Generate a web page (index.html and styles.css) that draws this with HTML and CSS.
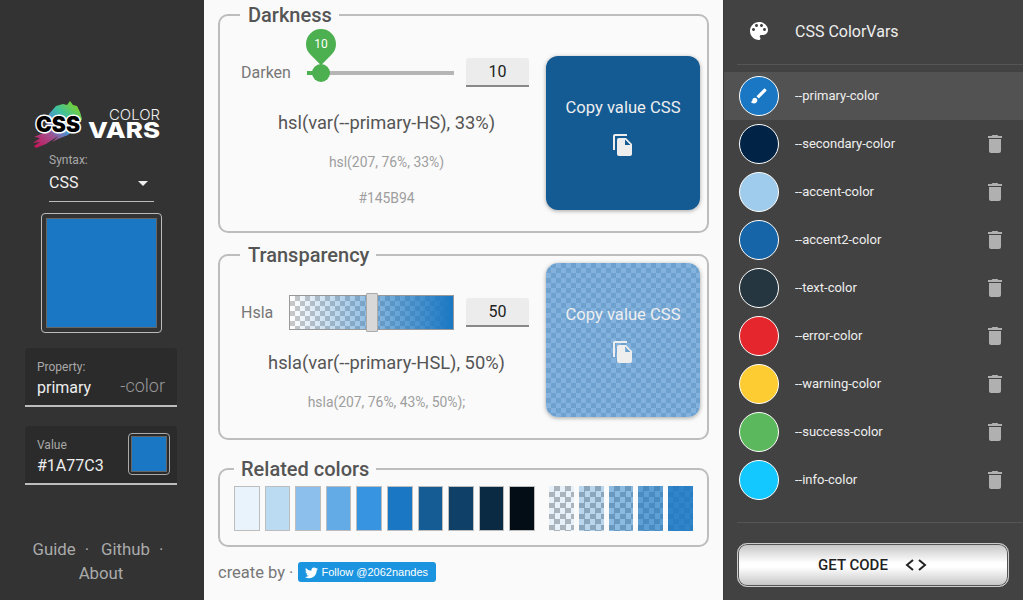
FILE: index.html
```html
<!DOCTYPE html>
<html lang="en">
<head>
<meta charset="utf-8">
<title>CSS ColorVars</title>
<link rel="stylesheet" href="styles.css">
</head>
<body>
<div class="app">
  <aside class="side">
    <svg class="logo" width="135" height="52" viewBox="0 0 135 52">
      <defs>
        <linearGradient id="brush" x1="46" y1="4" x2="6" y2="48" gradientUnits="userSpaceOnUse">
          <stop offset="0" stop-color="#7ed321"/>
          <stop offset=".3" stop-color="#3fc0a0"/>
          <stop offset=".5" stop-color="#4f8fd0"/>
          <stop offset=".7" stop-color="#a0508f"/>
          <stop offset="1" stop-color="#c2185b"/>
        </linearGradient>
      </defs>
      <polygon fill="url(#brush)" points="19,16 26,8 33,6 37,7 40,3 43,7 47,8 50,14 52,21 47,29 38,37 28,41 22,44 28,38 16,46 6,50 4,48 10,44 3,45 10,40 4,39 13,35 17,30"/>
      <text class="logo-css" x="6" y="34" textLength="44" lengthAdjust="spacingAndGlyphs">CSS</text>
      <text class="logo-color" x="79" y="22" textLength="51" lengthAdjust="spacingAndGlyphs">COLOR</text>
      <text class="logo-vars" x="58" y="40" textLength="72" lengthAdjust="spacingAndGlyphs">VARS</text>
    </svg>

    <div class="syntax">
      <div class="syntax-label">Syntax:</div>
      <div class="syntax-value"><span>CSS</span><i class="caret"></i></div>
    </div>

    <div class="preview"><div class="preview-fill"></div></div>

    <div class="field field-property">
      <div class="field-main">
        <div class="field-label">Property:</div>
        <div class="field-value">primary</div>
      </div>
      <div class="field-suffix">-color</div>
    </div>

    <div class="field field-color">
      <div class="field-main">
        <div class="field-label">Value</div>
        <div class="field-value">#1A77C3</div>
      </div>
      <div class="mini"><div class="mini-fill"></div></div>
    </div>

    <nav class="links">
      <a>Guide</a><span class="dot">·</span><a>Github</a><span class="dot dot-end">·</span> <a>About</a>
    </nav>
  </aside>

  <main class="main">
    <fieldset class="box box-dark">
      <legend>Darkness</legend>
      <div class="box-inner">
        <div class="col">
          <div class="row">
            <label class="row-label label-dark">Darken</label>
            <div class="slider">
              <div class="track"></div>
              <div class="track-on"></div>
              <div class="knob"></div>
              <div class="pin"><div class="pin-shape"></div><span class="pin-text">10</span></div>
            </div>
            <div class="num">10</div>
          </div>
          <div class="formula">hsl(var(--primary-HS), 33%)</div>
          <div class="result">hsl(207, 76%, 33%)</div>
          <div class="result result-2">#145B94</div>
        </div>
        <button class="copy copy-dark">
          <span>Copy value CSS</span>
          <svg class="copy-icon" width="24" height="24" viewBox="0 0 24 24"><path d="M16 1H4c-1.1 0-2 .9-2 2v14h2V3h12V1zm-1 4l6 6v10c0 1.1-.9 2-2 2H7.99C6.89 23 6 22.1 6 21l.01-14c0-1.1.89-2 1.99-2h7zm-1 7h5.5L14 6.5V12z"/></svg>
        </button>
      </div>
    </fieldset>

    <fieldset class="box box-alpha">
      <legend>Transparency</legend>
      <div class="box-inner">
        <div class="col">
          <div class="row row-alpha">
            <label class="row-label label-alpha">Hsla</label>
            <div class="alpha"><div class="alpha-thumb"></div></div>
            <div class="num">50</div>
          </div>
          <div class="formula">hsla(var(--primary-HSL), 50%)</div>
          <div class="result">hsla(207, 76%, 43%, 50%);</div>
        </div>
        <button class="copy copy-alpha">
          <span>Copy value CSS</span>
          <svg class="copy-icon" width="24" height="24" viewBox="0 0 24 24"><path d="M16 1H4c-1.1 0-2 .9-2 2v14h2V3h12V1zm-1 4l6 6v10c0 1.1-.9 2-2 2H7.99C6.89 23 6 22.1 6 21l.01-14c0-1.1.89-2 1.99-2h7zm-1 7h5.5L14 6.5V12z"/></svg>
        </button>
      </div>
    </fieldset>

    <fieldset class="box box-related">
      <legend>Related colors</legend>
      <div class="swatches">
        <div class="sw-group sw-solid">
          <div class="sw s1"></div><div class="sw s2"></div><div class="sw s3"></div><div class="sw s4"></div><div class="sw s5"></div>
          <div class="sw s6"></div><div class="sw s7"></div><div class="sw s8"></div><div class="sw s9"></div><div class="sw s10"></div>
        </div>
        <div class="sw-group sw-alpha">
          <div class="sa a1"></div><div class="sa a2"></div><div class="sa a3"></div><div class="sa a4"></div><div class="sa a5"></div>
        </div>
      </div>
    </fieldset>

    <div class="credit">
      <span>create by ·</span>
      <a class="tw">
        <svg width="15" height="15" viewBox="0 0 24 24"><path d="M22.46 6c-.77.35-1.6.58-2.46.69.88-.53 1.56-1.37 1.88-2.38-.83.5-1.75.85-2.72 1.05C18.37 4.5 17.26 4 16 4c-2.35 0-4.27 1.92-4.27 4.29 0 .34.04.67.11.98C8.28 9.09 5.11 7.38 3 4.79c-.37.63-.58 1.37-.58 2.15 0 1.49.75 2.81 1.91 3.56-.71 0-1.37-.2-1.95-.5v.03c0 2.08 1.48 3.82 3.44 4.21a4.22 4.22 0 0 1-1.93.07 4.28 4.28 0 0 0 4 2.98 8.521 8.521 0 0 1-5.33 1.84c-.34 0-.68-.02-1.02-.06C3.44 20.29 5.7 21 8.12 21 16 21 20.33 14.46 20.33 8.79c0-.19 0-.37-.01-.56.84-.6 1.56-1.36 2.14-2.23z"/></svg>
        <span>Follow @2062nandes</span>
      </a>
    </div>
  </main>

  <aside class="drawer">
    <header class="drawer-head">
      <svg class="palette" width="24" height="24" viewBox="0 0 24 24"><path d="M12 3c-4.97 0-9 4.03-9 9s4.03 9 9 9c.83 0 1.5-.67 1.5-1.5 0-.39-.15-.74-.39-1.01-.23-.26-.38-.61-.38-.99 0-.83.67-1.5 1.5-1.5H16c2.76 0 5-2.24 5-5 0-4.42-4.03-8-9-8zm-5.5 9c-.83 0-1.5-.67-1.5-1.5S5.67 9 6.5 9 8 9.67 8 10.5 7.33 12 6.5 12zm3-4C8.67 8 8 7.33 8 6.5S8.67 5 9.5 5s1.5.67 1.5 1.5S10.33 8 9.5 8zm5 0c-.83 0-1.5-.67-1.5-1.5S13.67 5 14.5 5s1.5.67 1.5 1.5S15.33 8 14.5 8zm3 4c-.83 0-1.5-.67-1.5-1.5S16.67 9 17.5 9s1.5.67 1.5 1.5-.67 1.5-1.5 1.5z"/></svg>
      <span class="drawer-title">CSS ColorVars</span>
    </header>
    <ul class="vars">
      <li class="var var-active">
        <span class="dotc c-primary"><svg width="24" height="24" viewBox="0 0 24 24"><path d="M7 14c-1.66 0-3 1.34-3 3 0 1.31-1.16 2-2 2 .92 1.22 2.49 2 4 2 2.21 0 4-1.79 4-4 0-1.66-1.34-3-3-3zm13.71-9.37l-1.34-1.34c-.39-.39-1.02-.39-1.41 0L9 12.25 11.75 15l8.96-8.96c.39-.39.39-1.02 0-1.41z"/></svg></span>
        <span class="var-name">--primary-color</span>
      </li>
      <li class="var"><span class="dotc c-secondary"></span><span class="var-name">--secondary-color</span><svg class="trash" width="24" height="24" viewBox="0 0 24 24"><path d="M6 19c0 1.1.9 2 2 2h8c1.1 0 2-.9 2-2V7H6v12zM19 4h-3.5l-1-1h-5l-1 1H5v2h14V4z"/></svg></li>
      <li class="var"><span class="dotc c-accent"></span><span class="var-name">--accent-color</span><svg class="trash" width="24" height="24" viewBox="0 0 24 24"><path d="M6 19c0 1.1.9 2 2 2h8c1.1 0 2-.9 2-2V7H6v12zM19 4h-3.5l-1-1h-5l-1 1H5v2h14V4z"/></svg></li>
      <li class="var"><span class="dotc c-accent2"></span><span class="var-name">--accent2-color</span><svg class="trash" width="24" height="24" viewBox="0 0 24 24"><path d="M6 19c0 1.1.9 2 2 2h8c1.1 0 2-.9 2-2V7H6v12zM19 4h-3.5l-1-1h-5l-1 1H5v2h14V4z"/></svg></li>
      <li class="var"><span class="dotc c-text"></span><span class="var-name">--text-color</span><svg class="trash" width="24" height="24" viewBox="0 0 24 24"><path d="M6 19c0 1.1.9 2 2 2h8c1.1 0 2-.9 2-2V7H6v12zM19 4h-3.5l-1-1h-5l-1 1H5v2h14V4z"/></svg></li>
      <li class="var"><span class="dotc c-error"></span><span class="var-name">--error-color</span><svg class="trash" width="24" height="24" viewBox="0 0 24 24"><path d="M6 19c0 1.1.9 2 2 2h8c1.1 0 2-.9 2-2V7H6v12zM19 4h-3.5l-1-1h-5l-1 1H5v2h14V4z"/></svg></li>
      <li class="var"><span class="dotc c-warning"></span><span class="var-name">--warning-color</span><svg class="trash" width="24" height="24" viewBox="0 0 24 24"><path d="M6 19c0 1.1.9 2 2 2h8c1.1 0 2-.9 2-2V7H6v12zM19 4h-3.5l-1-1h-5l-1 1H5v2h14V4z"/></svg></li>
      <li class="var"><span class="dotc c-success"></span><span class="var-name">--success-color</span><svg class="trash" width="24" height="24" viewBox="0 0 24 24"><path d="M6 19c0 1.1.9 2 2 2h8c1.1 0 2-.9 2-2V7H6v12zM19 4h-3.5l-1-1h-5l-1 1H5v2h14V4z"/></svg></li>
      <li class="var"><span class="dotc c-info"></span><span class="var-name">--info-color</span><svg class="trash" width="24" height="24" viewBox="0 0 24 24"><path d="M6 19c0 1.1.9 2 2 2h8c1.1 0 2-.9 2-2V7H6v12zM19 4h-3.5l-1-1h-5l-1 1H5v2h14V4z"/></svg></li>
    </ul>
    <div class="drawer-foot">
      <button class="get">
        <span>GET CODE</span>
        <svg width="24" height="14" viewBox="0 0 24 14"><path class="code-mark" d="M9 2 L3 7 L9 12 M15 2 L21 7 L15 12"/></svg>
      </button>
    </div>
  </aside>
</div>
</body>
</html>
```

FILE: styles.css
```css
* { box-sizing: border-box; }
html, body { margin: 0; height: 100%; }
body { font-family: Roboto, "Liberation Sans", sans-serif; overflow: hidden; }

.app { display: flex; width: 1023px; height: 600px; }

/* Left sidebar */
.side {
  width: 204px;
  flex: none;
  background: #333;
  padding: 98px 27px 0 25px;
  display: flex;
  flex-direction: column;
  align-items: stretch;
}
.logo { display: block; margin-left: 5px; flex: none; }
.logo-css {
  font: 900 21px Inter, "Liberation Sans", sans-serif;
  fill: #000;
  stroke: #fff;
  stroke-width: 3px;
  stroke-linejoin: round;
  paint-order: stroke;
}
.logo-color {
  font: 300 14px Inter, "Liberation Sans", sans-serif;
  fill: #f0f0f0;
}
.logo-vars {
  font: 800 22px Inter, "Liberation Sans", sans-serif;
  fill: #fff;
}
.syntax { margin: 3px 0 0 24px; width: 105px; border-bottom: 1px solid #bbb; padding-bottom: 8px; }
.syntax-label { font-size: 12px; line-height: 14px; color: #a8a8a8; }
.syntax-value {
  margin-top: 6px;
  display: flex;
  justify-content: space-between;
  align-items: center;
  font-size: 16px;
  line-height: 20px;
  color: #eee;
  padding-right: 6px;
}
.caret { width: 0; height: 0; border: 5px solid transparent; border-top-color: #eee; border-bottom: 0; }
.preview {
  width: 121px;
  height: 120px;
  margin: 11px 0 0 16px;
  border: 1px solid #bbb;
  border-radius: 4px;
  padding: 4px;
}
.preview-fill { height: 100%; background: #1a77c3; border: 1px solid #666; }

.field {
  width: 152px;
  height: 59px;
  background: #2b2b2b;
  border-bottom: 2px solid #bdbdbd;
  border-radius: 4px 4px 0 0;
  display: flex;
  justify-content: space-between;
  padding: 12px 12px 0;
}
.field-property { margin-top: 15px; }
.field-color { margin-top: 19px; padding: 7px 7px 0 12px; }
.field-label { font-size: 12px; line-height: 14px; color: #a8a8a8; }
.field-value { margin-top: 4px; font-size: 16px; line-height: 20px; color: #eee; }
.field-color .field-main { padding-top: 5px; }
.field-suffix { font-size: 18px; font-weight: 300; line-height: 20px; color: #999; padding-top: 16px; }
.mini { width: 42px; height: 42px; border: 1px solid #aaa; border-radius: 4px; padding: 2px; }
.mini-fill { height: 100%; background: #1a77c3; border: 1px solid #666; }

.links {
  width: 152px;
  margin-top: 52px;
  text-align: center;
  font-size: 16.8px;
  line-height: 24px;
  color: #aaa;
}
.dot { padding: 0 12px 0 9px; }
.dot-end { padding-right: 6px; }

/* Main */
.main { width: 519px; flex: none; background: #fafafa; padding: 7px 14px 0; }
.box {
  margin: 0;
  border: 2px solid #bdbdbd;
  border-radius: 10px;
  min-width: 0;
  width: 491px;
}
.box legend {
  font-size: 20px;
  font-weight: 500;
  line-height: 16px;
  color: #555;
  margin-left: -1px;
  padding: 0 7px 0 8px;
}
.box-dark { padding: 33px 7px 21px 21px; }
.box-alpha { margin-top: 14px; padding: 0 7px 21px 21px; }
.box-related { margin-top: 21px; padding: 9px 14px 14px; }
.box-related legend { margin-left: 0; padding: 0 7px; }
.box-inner { display: flex; gap: 17px; }
.col { flex: 1; min-width: 0; text-align: center; }
.row { display: flex; align-items: center; height: 29px; margin-top: 2px; }
.row-alpha { margin-top: 35px; }
.row-label { flex: none; text-align: left; font-size: 16px; color: #777; }
.label-dark { width: 66px; }
.label-alpha { width: 48px; }
.slider { position: relative; width: 147px; height: 18px; margin-top: 1px; }
.track { position: absolute; left: 0; right: 0; top: 7px; height: 4px; background: #b5b5b5; }
.track-on { position: absolute; left: 0; width: 14px; top: 7px; height: 4px; background: #4caf50; }
.knob { position: absolute; left: 5px; top: 0; width: 18px; height: 18px; border-radius: 50%; background: #4caf50; }
.pin { position: absolute; left: -1px; top: -35px; width: 30px; height: 30px; }
.pin-shape { width: 30px; height: 30px; background: #4caf50; border-radius: 50% 50% 0 50%; transform: rotate(45deg); }
.pin-text { position: absolute; inset: 0; text-align: center; line-height: 30px; font-size: 12px; color: #fff; }
.num {
  flex: none;
  width: 63px;
  height: 29px;
  margin-left: 12px;
  background: #ececec;
  border-bottom: 2px solid #888;
  border-radius: 3px 3px 0 0;
  text-align: center;
  font-size: 16px;
  line-height: 28px;
  color: #222;
}
.formula { margin-top: 24px; padding-left: 3px; font-size: 18.3px; line-height: 24px; color: #555; }
.result { margin-top: 17px; padding-left: 3px; font-size: 13.9px; line-height: 20px; color: #9e9e9e; }
.result-2 { margin-top: 16px; }

.copy {
  width: 154px;
  height: 154px;
  flex: none;
  border: 0;
  border-radius: 12px;
  box-shadow: 0 1px 4px rgba(0,0,0,.35);
  display: flex;
  flex-direction: column;
  align-items: center;
  color: #eee;
  font: 400 16.6px/20px Roboto, sans-serif;
  padding: 42px 0 0;
}
.copy-dark { background: #145b94; }
.copy-alpha {
  background:
    conic-gradient(#6fa1ce 25%, #82b2dd 0 50%, #6fa1ce 0 75%, #82b2dd 0) 0 0 / 10px 10px;
}
.copy-icon { margin-top: 15px; fill: #eee; }

.alpha {
  position: relative;
  width: 165px;
  height: 35px;
  border: 1px solid #999;
  background:
    linear-gradient(90deg, rgba(26,119,195,0), #1a77c3),
    conic-gradient(#c8c8c8 25%, #fff 0 50%, #c8c8c8 0 75%, #fff 0) 0 0 / 10px 10px;
}
.alpha-thumb {
  position: absolute;
  left: 76px;
  top: -3px;
  width: 12px;
  height: 39px;
  background: #d8d8d8;
  border: 1px solid #aaa;
  border-radius: 1px;
}

.swatches { display: flex; gap: 14px; height: 45px; }
.sw-group { display: flex; gap: 5px; }
.sw-solid { flex: 301; }
.sw-alpha { flex: 144; }
.sw { flex: 1; border: 1px solid #bdbdbd; }
.sa { flex: 1; }
.s1 { background: #e9f3fc; }
.s2 { background: #bbdbf3; }
.s3 { background: #8cbfeb; }
.s4 { background: #62abe6; }
.s5 { background: #3794e0; }
.s6 { background: #1a77c3; }
.s7 { background: #165c94; }
.s8 { background: #0f4068; }
.s9 { background: #0a2942; }
.s10 { background: #020d15; }
.sa { background-size: 100% 100%, 11px 11px; background-position: 0 0; }
.a1 { background-image: linear-gradient(rgba(26,119,195,.1), rgba(26,119,195,.1)), conic-gradient(#bbb 25%, #fff 0 50%, #bbb 0 75%, #fff 0); }
.a2 { background-image: linear-gradient(rgba(26,119,195,.3), rgba(26,119,195,.3)), conic-gradient(#bbb 25%, #fff 0 50%, #bbb 0 75%, #fff 0); }
.a3 { background-image: linear-gradient(rgba(26,119,195,.5), rgba(26,119,195,.5)), conic-gradient(#bbb 25%, #fff 0 50%, #bbb 0 75%, #fff 0); }
.a4 { background-image: linear-gradient(rgba(26,119,195,.7), rgba(26,119,195,.7)), conic-gradient(#bbb 25%, #fff 0 50%, #bbb 0 75%, #fff 0); }
.a5 { background-image: linear-gradient(rgba(26,119,195,.9), rgba(26,119,195,.9)), conic-gradient(#bbb 25%, #fff 0 50%, #bbb 0 75%, #fff 0); }

.credit { margin-top: 15px; display: flex; align-items: center; gap: 5px; height: 20px; font-size: 16.5px; color: #777; }
.tw {
  display: flex;
  align-items: center;
  gap: 2px;
  width: 138px;
  height: 20px;
  padding-left: 6px;
  background: #1b95e0;
  border-radius: 3px;
  color: #fff;
  font: 11px "Liberation Sans", sans-serif;
}
.tw svg { fill: #fff; }

/* Right drawer */
.drawer {
  width: 300px;
  flex: none;
  background: #424242;
  border-left: 1px solid #3a3a3a;
  display: flex;
  flex-direction: column;
}
.drawer-head {
  height: 65px;
  margin-left: 13px;
  border-bottom: 1px solid #555;
  display: flex;
  align-items: center;
  padding: 0 0 2px 10px;
  flex: none;
}
.palette { fill: #fff; }
.drawer-title { margin-left: 24px; font-size: 16px; color: #eee; }
.vars { list-style: none; margin: 7px 0 0; padding: 0; flex: none; }
.var { height: 48px; display: flex; align-items: center; padding: 0 16px 0 15px; }
.var-active { background: #525252; }
.dotc {
  width: 40px;
  height: 40px;
  flex: none;
  border-radius: 50%;
  border: 1px solid #fff;
  display: flex;
  align-items: center;
  justify-content: center;
}
.dotc svg { fill: #fff; width: 20px; height: 20px; }
.var-name { margin-left: 16px; flex: 1; font-size: 13px; color: #eee; padding-bottom: 2px; }
.trash { fill: #b0b0b0; }
.c-primary { background: #1a77c3; }
.c-secondary { background: #012345; }
.c-accent { background: #9fcbec; }
.c-accent2 { background: #1565a8; }
.c-text { background: #263640; }
.c-error { background: #e5262c; }
.c-warning { background: #fdcb32; }
.c-success { background: #5cb85c; }
.c-info { background: #13c8ff; }
.drawer-foot { margin: 18px 0 0 13px; border-top: 1px solid #555; padding-top: 20px; }
.get {
  display: flex;
  align-items: center;
  justify-content: center;
  gap: 16px;
  width: 272px;
  height: 44px;
  border: 1px solid #ccc;
  border-radius: 10px;
  box-shadow: inset 0 0 0 1px #555;
  background: linear-gradient(#c4c4c4, #fff 45%, #fff 55%, #c4c4c4);
  font: 500 15px Roboto, sans-serif;
  color: #222;
  padding: 0;
}
.code-mark { fill: none; stroke: #222; stroke-width: 2; }
```
